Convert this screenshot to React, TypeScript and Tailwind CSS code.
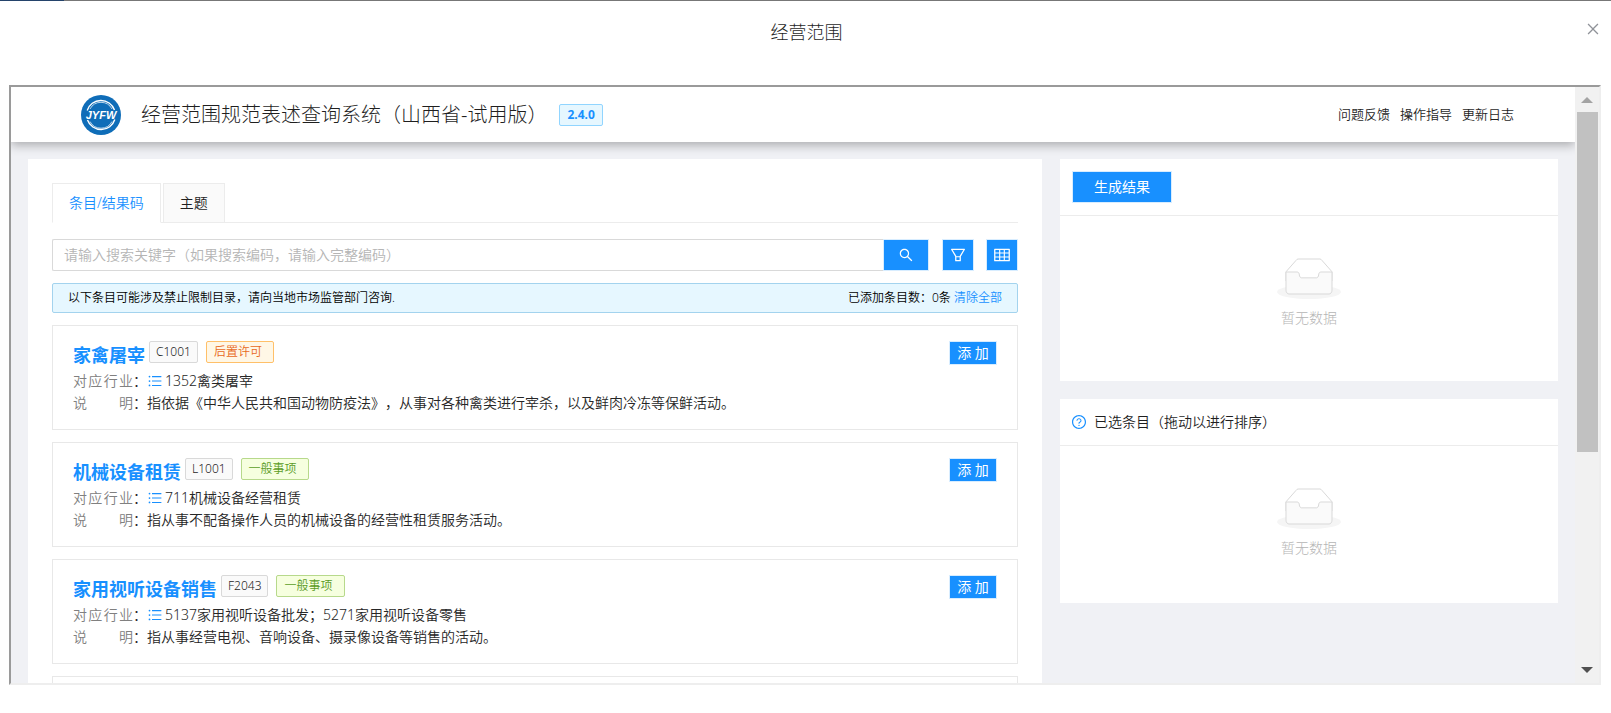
import React, { useState } from "react";
import {
  AiOutlineClose,
  AiOutlineFilter,
  AiOutlineQuestionCircle,
  AiOutlineSearch,
  AiOutlineTable,
  AiOutlineUnorderedList,
} from "react-icons/ai";

interface ScopeItem {
  name: string;
  code: string;
  tag: string;
  tagType: "post" | "normal";
  industry: string;
  description: string;
}

const items: ScopeItem[] = [
  {
    name: "家禽屠宰",
    code: "C1001",
    tag: "后置许可",
    tagType: "post",
    industry: "1352禽类屠宰",
    description:
      "指依据《中华人民共和国动物防疫法》，从事对各种禽类进行宰杀，以及鲜肉冷冻等保鲜活动。",
  },
  {
    name: "机械设备租赁",
    code: "L1001",
    tag: "一般事项",
    tagType: "normal",
    industry: "711机械设备经营租赁",
    description: "指从事不配备操作人员的机械设备的经营性租赁服务活动。",
  },
  {
    name: "家用视听设备销售",
    code: "F2043",
    tag: "一般事项",
    tagType: "normal",
    industry: "5137家用视听设备批发；5271家用视听设备零售",
    description: "指从事经营电视、音响设备、摄录像设备等销售的活动。",
  },
];

const tabs = ["条目/结果码", "主题"];
const links = ["问题反馈", "操作指导", "更新日志"];

const Logo: React.FC = () => (
  <svg width="40" height="40" viewBox="0 0 40 40" aria-hidden="true">
    <circle cx="20" cy="20" r="20" fill="#0f6db8" />
    <path
      d="M6.5 25A14.4 14.4 0 0 0 33.8 24.5M33.5 15A14.4 14.4 0 0 0 6.2 15.5"
      fill="none"
      stroke="#fff"
      strokeWidth="1.4"
    />
    <path
      d="M9 14A12.4 12.4 0 0 1 31 14M31 26.5A12.4 12.4 0 0 1 9 26.5"
      fill="none"
      stroke="#fff"
      strokeWidth="0.7"
    />
    <text
      x="20"
      y="24"
      textAnchor="middle"
      fill="#fff"
      fontSize="11"
      fontWeight="700"
      fontStyle="italic"
      fontFamily="Liberation Sans, sans-serif"
    >
      JYFW
    </text>
  </svg>
);

const Empty: React.FC<{ className: string }> = ({ className }) => (
  <div className={`flex flex-col items-center gap-2 pt-[42px] ${className}`}>
    <svg width="64" height="41" viewBox="0 0 64 41" aria-hidden="true">
      <g transform="translate(0 1)" fill="none" fillRule="evenodd">
        <ellipse fill="#f5f5f5" cx="32" cy="33" rx="32" ry="7" />
        <g fillRule="nonzero" stroke="#d9d9d9">
          <path d="M55 12.76L44.854 1.258C44.367.474 43.656 0 42.907 0H21.093c-.749 0-1.46.474-1.947 1.257L9 12.761V22h46v-9.24z" />
          <path
            d="M41.613 15.931c0-1.605.994-2.93 2.227-2.931H55v18.137C55 33.26 53.68 35 52.05 35h-40.1C10.32 35 9 33.259 9 31.137V13h11.16c1.233 0 2.227 1.323 2.227 2.928v.022c0 1.605 1.005 2.901 2.237 2.901h14.752c1.232 0 2.237-1.308 2.237-2.913v-.007z"
            fill="#fafafa"
          />
        </g>
      </g>
    </svg>
    <p className="text-sm leading-[22px] font-light text-[#b5b5b5]">暂无数据</p>
  </div>
);

const ItemCard: React.FC<{ item: ScopeItem }> = ({ item }) => (
  <li className="flex items-start justify-between border border-[#e8e8e8] px-5 py-[15px]">
    <div className="text-sm leading-[22px] text-[#262626]">
      <div className="mb-px flex items-start">
        <h2 className="mr-1 text-lg leading-7 font-bold text-[#1890ff]">
          {item.name}
        </h2>
        <span className="mr-2 rounded-xs border border-[#d9d9d9] bg-[#fafafa] px-[6px] text-xs leading-5">
          {item.code}
        </span>
        <span
          className={`rounded-xs border pr-[11px] pl-[7px] text-xs leading-5 ${
            item.tagType === "post"
              ? "border-[#ffc069] bg-[#fff7e6] text-[#e8691b]"
              : "border-[#b7d98b] bg-[#f6ffdf] text-[#5b9c1f]"
          }`}
        >
          {item.tag}
        </span>
      </div>
      <div className="flex items-center">
        <span className="flex w-[60px] justify-between text-[#808080]">
          {[..."对应行业"].map((char) => (
            <span key={char}>{char}</span>
          ))}
        </span>
        <span>：</span>
        <AiOutlineUnorderedList className="mr-[2px] size-4 text-[#1890ff]" />
        <span>{item.industry}</span>
      </div>
      <div className="flex">
        <span className="flex w-[60px] justify-between text-[#808080]">
          <span>说</span>
          <span>明</span>
        </span>
        <span>：</span>
        <span>{item.description}</span>
      </div>
    </div>
    <button
      type="button"
      className="h-6 w-12 shrink-0 border border-[#d8edff] bg-[#1890ff] text-sm leading-5 font-normal text-white"
    >
      添 加
    </button>
  </li>
);

const App: React.FC = () => {
  const [activeTab, setActiveTab] = useState(tabs[0]);
  const [keyword, setKeyword] = useState("");

  return (
    <div className="flex h-screen flex-col bg-white pb-7 font-['Noto_Sans','Noto_Sans_CJK_SC',sans-serif] font-[350] text-[#1f1f1f] [text-spacing-trim:space-all]">
      {/* edge of the page behind the dialog */}
      <div className="flex h-px shrink-0 bg-[#777]">
        <div className="w-16 bg-[#24436b]" />
      </div>
      <div className="flex h-[84px] shrink-0 items-start pr-[10px]">
        <div className="w-7" />
        <h1 className="flex-1 pt-[17px] text-center text-lg leading-7 font-light">
          经营范围
        </h1>
        <button
          type="button"
          aria-label="关闭"
          className="mt-5 text-[#909399]"
        >
          <AiOutlineClose className="size-4" />
        </button>
      </div>

      <div className="mr-[10px] ml-[9px] flex min-h-0 flex-1 border-2 border-t-[#9a9a9a] border-r-[#eee] border-b-[#eee] border-l-[#9a9a9a]">
        <div className="flex min-w-0 flex-1 flex-col overflow-hidden bg-[#f0f1f5]">
          <header className="z-10 flex h-[55px] shrink-0 items-center bg-white pr-[61px] pl-[70px] shadow-[0_3px_10px_rgba(0,0,0,0.3)]">
            <Logo />
            <span className="ml-5 text-xl font-light">
              经营范围规范表述查询系统（山西省-试用版）
            </span>
            <span className="ml-3 rounded-xs border border-[#91d5ff] bg-[#e6f7ff] px-[7px] text-xs leading-5 font-bold text-[#1890ff]">
              2.4.0
            </span>
            <nav className="ml-auto flex gap-[10px] text-[13px]">
              {links.map((link) => (
                <a key={link} href="#">
                  {link}
                </a>
              ))}
            </nav>
          </header>

          <main className="grid min-h-0 flex-1 grid-cols-3 gap-[18px] px-[17px] pt-[17px]">
            <section className="col-span-2 min-h-full bg-white p-6">
              <div
                role="tablist"
                className="mb-4 flex h-10 gap-[2px] border-b border-[#ececec] text-sm"
              >
                {tabs.map((tab) => (
                  <button
                    key={tab}
                    type="button"
                    role="tab"
                    aria-selected={tab === activeTab}
                    onClick={() => setActiveTab(tab)}
                    className={`h-10 border px-4 ${
                      tab === activeTab
                        ? "border-[#ececec] border-b-white bg-white text-[#1890ff]"
                        : "border-[#ececec] bg-[#fafafa]"
                    }`}
                  >
                    {tab}
                  </button>
                ))}
              </div>

              <div className="flex h-8">
                <input
                  type="text"
                  aria-label="搜索关键字"
                  value={keyword}
                  onChange={(e) => setKeyword(e.target.value)}
                  placeholder="请输入搜索关键字（如果搜索编码，请输入完整编码）"
                  className="min-w-0 flex-1 rounded-l-xs border border-r-0 border-[#d9d9d9] px-[11px] text-sm outline-none placeholder:text-[#b5b5b5]"
                />
                <button
                  type="button"
                  aria-label="搜索"
                  className="mr-[13px] flex w-[46px] items-center justify-center border border-[#d8edff] bg-[#1890ff] text-white"
                >
                  <AiOutlineSearch className="size-4" />
                </button>
                <button
                  type="button"
                  aria-label="筛选"
                  className="mr-3 flex w-8 items-center justify-center border border-[#d8edff] bg-[#1890ff] text-white"
                >
                  <AiOutlineFilter className="size-[18px]" />
                </button>
                <button
                  type="button"
                  aria-label="表格"
                  className="flex w-8 items-center justify-center border border-[#d8edff] bg-[#1890ff] text-white"
                >
                  <AiOutlineTable className="size-[18px]" />
                </button>
              </div>

              <div className="my-3 flex h-[30px] items-center justify-between rounded-xs border border-[#a3d3ee] bg-[#e6f7ff] px-[15px] text-xs text-black">
                <span>
                  以下条目可能涉及禁止限制目录，请向当地市场监管部门咨询.
                </span>
                <span>
                  已添加条目数：0条{" "}
                  <a href="#" className="text-[#1890ff]">
                    清除全部
                  </a>
                </span>
              </div>

              <ul className="flex flex-col gap-3">
                {items.map((item) => (
                  <ItemCard key={item.code} item={item} />
                ))}
                <li className="h-[105px] border border-[#e8e8e8]" />
              </ul>
            </section>

            <aside className="flex flex-col gap-[18px]">
              <section className="bg-white">
                <div className="border-b border-[#ececec] p-3">
                  <button
                    type="button"
                    className="h-8 w-[100px] border border-[#d8edff] bg-[#1890ff] text-sm font-normal text-white"
                  >
                    生成结果
                  </button>
                </div>
                <Empty className="pb-[52px]" />
              </section>
              <section className="bg-white">
                <h2 className="flex h-[47px] items-center gap-[7px] border-b border-[#ececec] px-[11px] text-sm">
                  <AiOutlineQuestionCircle className="size-4 text-[#1890ff]" />
                  已选条目（拖动以进行排序）
                </h2>
                <Empty className="pb-[44px]" />
              </section>
            </aside>
          </main>
        </div>

        <div
          aria-hidden="true"
          className="flex w-6 shrink-0 flex-col items-center bg-[#f1f1f1]"
        >
          <svg width="12" height="25" viewBox="0 0 12 25">
            <path d="M0 16L6 10L12 16Z" fill="#a3a3a3" />
          </svg>
          <div className="h-[57%] w-[21px] bg-[#c1c1c1]" />
          <svg className="mt-auto" width="12" height="25" viewBox="0 0 12 25">
            <path d="M0 9L6 15L12 9Z" fill="#505050" />
          </svg>
        </div>
      </div>
    </div>
  );
};

export default App;
